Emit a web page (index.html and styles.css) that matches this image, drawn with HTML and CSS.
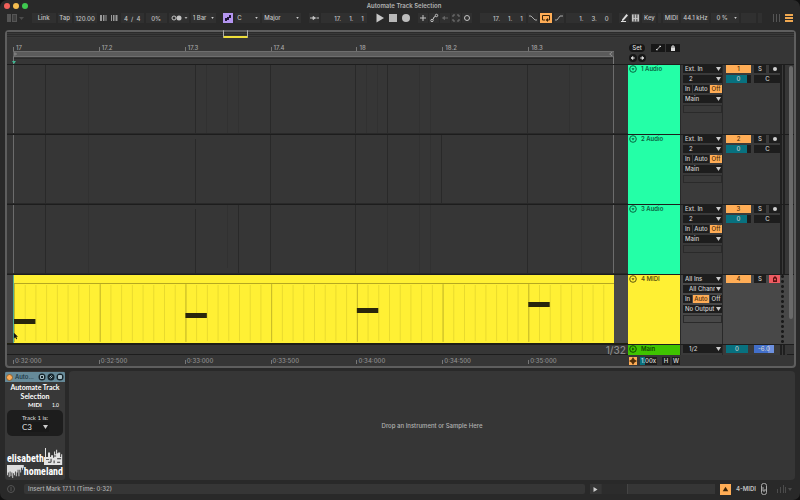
FILE: index.html
```html
<!DOCTYPE html>
<html lang="en">
<head>
<meta charset="utf-8">
<title>Automate Track Selection</title>
<link rel="stylesheet" href="styles.css">
</head>
<body>
<div class="window">
  <header class="titlebar">
    <div class="lights"><i class="light red"></i><i class="light amber"></i><i class="light green"></i></div>
    <h1>Automate Track Selection</h1>
    <div class="lights"></div>
  </header>

  <nav class="toolbar" aria-label="Control bar">
    <div class="group view-group">
      <svg class="ic" viewBox="0 0 10 10"><path fill="#555" d="M0 1h4v8H0zM5 1h5v8H5z"/><path fill="#404040" d="M6 2h3v6H6z"/></svg>
      <svg class="tiny" viewBox="0 0 5 5"><path fill="#4c4c4c" d="M0 1h5L2.500 4z"/></svg>
    </div>
    <div class="group">
      <button class="w24">Link</button><button class="w14">Tap</button>
      <input class="w23" aria-label="Tempo" value="120.00">
      <span class="nudge">
        <svg class="ic" viewBox="0 0 10 10"><path fill="#999" d="M1 2h2v6H1zM4 2h1.500v6H4zM6.500 2h1v6h-1z"/></svg>
        <svg class="ic" viewBox="0 0 10 10"><path fill="#999" d="M2 2h1v6H2zM4 2h1.500v6H4zM6.500 2h2v6h-2z"/></svg>
      </span>
      <input class="w23 spaced" aria-label="Time signature" value="4  /  4">
      <input class="w21" aria-label="Groove amount" value="0%">
      <button class="w20" aria-label="Metronome"><svg viewBox="0 0 20 10"><circle cx="5" cy="5" r="2" fill="none" stroke="#c4c4c4"/><circle cx="10" cy="5" r="2.500" fill="#c4c4c4"/><path fill="#aaa" d="M15.500 4h3L17 6z"/></svg></button>
      <select class="w25" aria-label="Quantization"><option>1 Bar</option></select>
    </div>
    <div class="group">
      <button class="w10 violet" aria-label="Scale mode"><svg viewBox="0 0 10 10"><path fill="#201638" d="M2 5h2v3H2zM4 4h2v3H4zM6 2h2v3H6z"/></svg></button>
      <select class="w25" aria-label="Root note"><option>C</option></select>
      <select class="w39" aria-label="Scale name"><option>Major</option></select>
    </div>
    <div class="group">
      <button class="w10" aria-label="Follow"><svg viewBox="0 0 10 10"><path stroke="#c4c4c4" fill="#c4c4c4" d="M1 5h3M7.500 5H10M4 3.500v3L6.500 5z"/></svg></button>
      <input class="w46 num" aria-label="Position" value="17.     1.     1">
    </div>
    <div class="group transport">
      <button class="w10" aria-label="Play"><svg viewBox="0 0 10 10"><path fill="#c8c8c8" d="M1.500.5 9 5 1.500 9.500z"/></svg></button>
      <button class="w10" aria-label="Stop"><svg viewBox="0 0 10 10"><path fill="#b8b8b8" d="M1 1h8v8H1z"/></svg></button>
      <button class="w10" aria-label="Record"><svg viewBox="0 0 10 10"><circle cx="5" cy="5" r="4" fill="#bdbdbd"/></svg></button>
    </div>
    <div class="group tight">
      <button class="w10" aria-label="Overdub"><svg viewBox="0 0 10 10"><path stroke="#c4c4c4" d="M5 2v6M2 5h6"/></svg></button>
      <button class="w10" aria-label="Automation arm"><svg viewBox="0 0 10 10"><g fill="none" stroke="#c4c4c4"><circle cx="3" cy="7.500" r="1.200"/><circle cx="7.500" cy="2.500" r="1.200"/><path d="M4 6.500 5 4l1.500-.5"/></g></svg></button>
      <button class="w10" aria-label="Re-enable automation"><svg viewBox="0 0 10 10"><path stroke="#666" fill="#666" d="M4 5h4M2.500 5l2-1.500v3z"/></svg></button>
      <button class="w10" aria-label="Capture"><svg viewBox="0 0 10 10"><path fill="none" stroke="#777" d="M2 4V2h2M6 2h2v2M8 6v2H6M4 8H2V6"/></svg></button>
      <button class="w10" aria-label="Session record"><svg viewBox="0 0 10 10"><circle cx="5" cy="5" r="2.500" fill="none" stroke="#c4c4c4"/></svg></button>
    </div>
    <div class="group">
      <input class="w46 num" aria-label="Loop start" value="17.     1.     1">
      <button class="w10" aria-label="Punch in"><svg viewBox="0 0 10 10"><path fill="none" stroke="#aaa" d="M1 3h2l4 4h2"/></svg></button>
      <button class="w12 orange" aria-label="Loop"><svg viewBox="0 0 12 10"><path fill="none" stroke="#3a2408" d="M5 7H2.500V2.500h7V7H8"/><path fill="#3a2408" d="M8 5v4L5.500 7z"/></svg></button>
      <button class="w10" aria-label="Punch out"><svg viewBox="0 0 10 10"><path fill="none" stroke="#aaa" d="M1 7h2l3-4h3"/></svg></button>
      <input class="w46 num" aria-label="Loop length" value="1.     3.     0">
    </div>
    <div class="group">
      <button class="w10" aria-label="Draw mode"><svg viewBox="0 0 10 10"><path fill="#ddd" d="M3 6.500 7.500 1 9 2.500 4.500 7.500 3 8z"/><path stroke="#ddd" d="M2 8.500h5"/></svg></button>
      <button class="w9" aria-label="Computer keyboard"><svg viewBox="0 0 10 10"><path fill="#c4c4c4" d="M1 1h8v8H1z"/><path stroke="#333" d="M3.500 1v4M6.500 1v4M3.500 6v3M6.500 6v3"/></svg></button>
      <button class="w14">Key</button><i class="led w3"></i><button class="w16">MIDI</button>
      <button class="w28">44.1 kHz</button>
      <select class="w28 cpu" aria-label="CPU load"><option>0 %</option></select>
      <i class="led w15"></i><i class="led w4"></i>
    </div>
    <div class="group browser">
      <svg class="ic" viewBox="0 0 10 10"><path stroke="#555" d="M1.500 1v8M4.500 1v8M7.500 1v8"/></svg>
      <svg class="ic" viewBox="0 0 10 10"><path stroke="#f0a850" stroke-width="2" d="M1 2h8M1 5h8M1 8h8"/></svg>
    </div>
  </nav>

  <main class="arrangement">
    <div class="overview"><i class="viewport"></i></div>
    <div class="board">
      <div class="row head-row">
        <div class="ruler">
          <ol class="beats"><li>17</li><li>17.2</li><li>17.3</li><li>17.4</li><li>18</li><li>18.2</li><li>18.3</li></ol>
          <div class="loopbar">
            <svg viewBox="0 0 6 6"><path fill="none" stroke="#999" d="M1 1l3 2-3 2z"/></svg>
            <svg viewBox="0 0 6 6"><path fill="none" stroke="#aaa" d="M5 0 1 3l4 3"/></svg>
          </div>
          <div class="scrub"><svg class="marker" viewBox="0 0 4 3"><path fill="#3fb591" d="M0 0h4L2 3z"/></svg></div>
        </div>
        <div class="locators">
          <div class="line"><button class="pill">Set</button>
            <button class="sq" aria-label="Optimize"><svg viewBox="0 0 14 8"><path stroke="#ddd" fill="#ddd" stroke-width=".8" d="M6 5.500 9 2.500M5.500 5v1h1zM8.500 2H9.500V3z"/></svg></button>
            <button class="sq" aria-label="Lock envelopes"><svg viewBox="0 0 14 8"><path fill="#ddd" d="M5 3.500h4V7H5z"/><path fill="none" stroke="#ddd" d="M6 4V2h2v2"/></svg></button></div>
          <div class="line arrows">
            <button class="round" aria-label="Previous locator"><svg viewBox="0 0 8 8"><path stroke="#ddd" fill="#ddd" stroke-width=".8" d="M3 4h3M2 4l2-1.500v3z"/></svg></button>
            <button class="round" aria-label="Next locator"><svg viewBox="0 0 8 8"><path stroke="#ddd" fill="#ddd" stroke-width=".8" d="M2 4h3M6 4 4 2.500v3z"/></svg></button></div>
        </div>
      </div>

      <section class="row track">
        <div class="lane"><svg class="grid" viewBox="0 0 601 69" preserveAspectRatio="none"><path class="strong" d="M32 0v69M182 0v69M257 0v69M343 0v69M375 0v69M515 0v69"/><path class="faint" d="M75 0v69M193 0v69M214 0v69M225 0v69M354 0v69M365 0v69M407 0v69M418 0v69M557 0v69M569 0v69"/></svg></div>
        <div class="name mint"><svg class="fold" viewBox="0 0 8 8"><circle cx="4" cy="4" r="3.300"/><path d="M2.500 3.200h3L4 5.500z"/></svg><h2>1 Audio</h2></div>
        <div class="io"><select aria-label="Input 1"><option>Ext. In</option></select><select class="in" aria-label="Channel 1"><option>2</option></select>
          <div class="monitor"><button>In</button><button>Auto</button><button class="on">Off</button></div><select aria-label="Output 1"><option>Main</option></select><i class="blank"></i></div>
        <div class="mixer"><button class="act">1</button><button>S</button><button aria-label="Arm 1"><i class="dot"></i></button><input class="vol" aria-label="Volume 1" value="0"><input class="pan" aria-label="Pan 1" value="C"></div>
        <div class="meter"></div>
      </section>

      <section class="row track">
        <div class="lane"><svg class="grid" viewBox="0 0 601 69" preserveAspectRatio="none"><path class="strong" d="M32 0v69M182 4v65M257 0v69M343 0v69M375 0v69M429 0v69M515 0v69"/><path class="faint" d="M75 0v69M407 0v69M418 0v69M569 0v69"/></svg></div>
        <div class="name mint"><svg class="fold" viewBox="0 0 8 8"><circle cx="4" cy="4" r="3.300"/><path d="M2.500 3.200h3L4 5.500z"/></svg><h2>2 Audio</h2></div>
        <div class="io"><select aria-label="Input 2"><option>Ext. In</option></select><select class="in" aria-label="Channel 2"><option>2</option></select>
          <div class="monitor"><button>In</button><button>Auto</button><button class="on">Off</button></div><select aria-label="Output 2"><option>Main</option></select><i class="blank"></i></div>
        <div class="mixer"><button class="act">2</button><button>S</button><button aria-label="Arm 2"><i class="dot"></i></button><input class="vol" aria-label="Volume 2" value="0"><input class="pan" aria-label="Pan 2" value="C"></div>
        <div class="meter"></div>
      </section>

      <section class="row track">
        <div class="lane"><svg class="grid" viewBox="0 0 601 69" preserveAspectRatio="none"><path class="strong" d="M32 0v69M182 4v65M225 0v69M257 0v69M343 0v69M515 0v69"/><path class="faint" d="M75 0v69M214 0v64M375 0v69M407 0v69M418 0v69M569 0v69"/></svg></div>
        <div class="name mint"><svg class="fold" viewBox="0 0 8 8"><circle cx="4" cy="4" r="3.300"/><path d="M2.500 3.200h3L4 5.500z"/></svg><h2>3 Audio</h2></div>
        <div class="io"><select aria-label="Input 3"><option>Ext. In</option></select><select class="in" aria-label="Channel 3"><option>2</option></select>
          <div class="monitor"><button>In</button><button>Auto</button><button class="on">Off</button></div><select aria-label="Output 3"><option>Main</option></select><i class="blank"></i></div>
        <div class="mixer"><button class="act">3</button><button>S</button><button aria-label="Arm 3"><i class="dot"></i></button><input class="vol" aria-label="Volume 3" value="0"><input class="pan" aria-label="Pan 3" value="C"></div>
        <div class="meter"></div>
      </section>

      <section class="row track selected">
        <div class="lane"><svg class="clip" viewBox="0 0 56 68" preserveAspectRatio="none">
          <defs>
            <pattern id="fine" width="1" height="68" patternUnits="userSpaceOnUse"><rect width=".09" height="68" fill="#e8da2d"/></pattern>
            <pattern id="beat" width="8" height="68" patternUnits="userSpaceOnUse"><rect width=".09" height="68" fill="#c6b926"/></pattern>
          </defs>
          <rect width="56" height="68" fill="#fff034"/>
          <rect y="10" width="56" height="56" fill="url(#fine)"/><rect y="9" width="56" height="58" fill="url(#beat)"/>
          <rect y="8" width="56" height="1" fill="#b5a820"/>
          <path fill="#29260c" d="M0 44h2v5H0zM16 38h2v5h-2zM32 33h2v5h-2zM48 27h2v5h-2z"/></svg>
          <svg class="cursor" viewBox="0 0 6 8"><path fill="#111" d="M1 0v7l1.500-1.500L4 8l1-.5L4 5h2z"/></svg></div>
        <div class="name yellow"><svg class="fold" viewBox="0 0 8 8"><circle cx="4" cy="4" r="3.300"/><path d="M2.500 3.200h3L4 5.500z"/></svg><h2>4 MIDI</h2></div>
        <div class="io"><select aria-label="Input 4"><option>All Ins</option></select><select class="in" aria-label="Channel 4"><option>All Channels</option></select>
          <div class="monitor"><button>In</button><button class="on">Auto</button><button>Off</button></div><select aria-label="Output 4"><option>No Output</option></select><i class="blank"></i></div>
        <div class="mixer"><button class="act">4</button><button>S</button><button class="armed" aria-label="Arm 4"><svg viewBox="0 0 10 8"><path fill="#5a1010" d="M3 3l2-2 2 2v4H3z"/><circle cx="5" cy="4.500" r="1" fill="#ef5b62"/></svg></button></div>
        <div class="meter dots"></div>
      </section>

      <section class="row main-row">
        <div class="lane"><span class="gridsize">1/32</span></div>
        <div class="name green"><svg class="fold" viewBox="0 0 8 8"><circle cx="4" cy="4" r="3.300"/><path d="M3.200 2.500v3L5.500 4z"/></svg><h2>Main</h2></div>
        <div class="io"><select class="in" aria-label="Main output"><option>1/2</option></select></div>
        <div class="mixer"><input class="cue" aria-label="Main pan" value="0"><input class="gain" aria-label="Main volume" value="-6.0"></div>
        <div class="meter"></div>
      </section>

      <div class="row foot-row">
        <div class="ruler"><ol class="beats times"><li>0:32:000</li><li>0:32:500</li><li>0:33:000</li><li>0:33:500</li><li>0:34:000</li><li>0:34:500</li><li>0:35:000</li></ol></div>
        <div class="zoombar">
          <button class="orange" aria-label="Automation mode"><svg viewBox="0 0 8 8"><path fill="#54300a" d="M4 0l1.500 2.500L8 4 5.500 5.500 4 8 2.500 5.500 0 4l2.500-1.500z"/></svg></button>
          <input class="speed" aria-label="Playback speed" value="1.00x"><button>H</button><button>W</button>
        </div>
      </div>
      <i class="scrollbar"></i>
    </div>
  </main>

  <section class="devices">
    <article class="device">
      <header><i class="power"></i><h3>Auto...</h3>
        <svg viewBox="0 0 8 8"><circle cx="4" cy="4" r="3.500"/><path d="M2.500 2.500h3v3h-3z"/></svg>
        <svg viewBox="0 0 8 8"><circle cx="4" cy="4" r="3.500"/><path d="M2.500 4.500 4.500 2.500M3.500 5.500l2-2"/></svg>
        <svg viewBox="0 0 8 8"><circle cx="4" cy="4" r="3.500"/><path class="solid" d="M2.500 2.500h3v3h-3z"/></svg>
      </header>
      <div class="device-body">
        <p class="device-title">Automate Track Selection</p>
        <p class="version"><span></span><b>MIDI</b><small>1.0</small></p>
        <div class="card"><label for="note">Track 1 is:</label><select id="note"><option>C3</option></select></div>
        <div class="brand">
          <div class="brand-line"><span>elisabeth</span><svg class="skyline" viewBox="0 0 19 19" preserveAspectRatio="none"><path fill="#e4e4e4" d="M0 19V10h1V0h1v10h2V5h2v5h1V8h2v3h1V4h1v3h1V2h1v4h1V5h2v5h1V7h1v12z"/><path stroke="#333" d="M2 13h3M7 12v4M10 9h2M13 12h4M4 16h3M10 14v3M13 16h3"/></svg></div>
          <div class="brand-line"><svg class="wave" viewBox="0 0 19 14" preserveAspectRatio="none"><path fill="#ddd" d="M0 0h19v3h-1v2h-1V3h-1v5h-1V5h-1v7h-1V5h-1v3h-1v4h-1V7H9v4H8V9H7v5H6V8H5v4H4V7H3v6H2V8H1v3H0z"/></svg><span>homeland</span></div>
        </div>
      </div>
    </article>
    <div class="dropzone"><p>Drop an Instrument or Sample Here</p></div>
  </section>

  <footer class="status">
    <svg class="info" viewBox="0 0 8 8"><circle cx="4" cy="4" r="3.500" fill="none" stroke="#555"/><path stroke="#555" d="M4 2v4"/></svg>
    <p class="message">Insert Mark 17.1.1 (Time: 0:32)</p>
    <div class="preview"><button aria-label="Preview"><svg viewBox="0 0 10 10"><path fill="#ccc" d="M3 3l4 2.500L3 8z"/></svg></button><i></i></div>
    <button class="warn" aria-label="Show device view"><svg viewBox="0 0 12 12"><path fill="#3a2408" d="M6 3l3 5H3z"/></svg></button>
    <b class="current">4-MIDI</b>
    <svg class="plug" viewBox="0 0 6 12"><rect x=".5" y=".5" width="5" height="11" rx="2" fill="none" stroke="#aaa"/><path stroke="#aaa" fill="none" d="M2 4v4h2V6"/></svg>
    <svg class="bars" viewBox="0 0 16 8"><path stroke="#4c4c4c" d="M1.500 4v4M4.500 2v6M7.500 0v8M9.500 2v6"/><path fill="#4c4c4c" d="M12 3h4l-2 3z"/></svg>
  </footer>
</div>
</body>
</html>
```
FILE: styles.css
```css
* { box-sizing: border-box; margin: 0; padding: 0; }
html { background: #101010; }
body { font: 500 6px/8px Inter, "Liberation Sans", sans-serif; color: #c4c4c4; }
svg { display: block; }
ol { list-style: none; }
i { font-style: normal; display: block; }
h1, h2, h3, p { font-size: inherit; font-weight: inherit; white-space: nowrap; }

button, input, select {
  font: inherit; color: inherit; border: 0; border-radius: 0;
  background-color: #232323; text-align: center; white-space: nowrap;
  min-width: 0; width: 100%; height: 8px; appearance: none; overflow: hidden;
}
button svg { width: 100%; height: 100%; }
select {
  text-align: left; padding: 0 7px 0 2px;
  background-image: url("data:image/svg+xml,%3Csvg xmlns='http://www.w3.org/2000/svg' viewBox='0 0 5 4'%3E%3Cpath fill='%23ccc' d='M0 0h5L2.500 4z'/%3E%3C/svg%3E");
  background-repeat: no-repeat; background-position: right 1px center; background-size: 5px 4px;
}

.window { min-height: 100vh; display: flex; flex-direction: column; background: #292929; border-radius: 7px; overflow: hidden; padding-bottom: 5px; }

.titlebar { display: flex; align-items: center; height: 12px; padding: 0 0 0 4px; }
.titlebar h1 { font-size: 6px; font-weight: 600; color: #b4b4b4; padding-left: 4px; }
.lights { flex: 1; display: flex; gap: 3px; }
.light { width: 6px; height: 6px; border-radius: 50%; }
.red { background: #f0605a; }
.amber { background: #f4bd4f; }
.green { background: #3fc950; }

.toolbar { display: flex; justify-content: space-between; height: 12px; align-items: center; padding: 0 6px 0 7px; }
.toolbar .group { display: flex; gap: 2px; align-items: center; }
.toolbar .tight { gap: 1px; }
.toolbar .transport { gap: 3px; }
.toolbar button, .toolbar input, .toolbar select { height: 10px; background-color: #303030; }
.toolbar select { background-size: 3px 2px; background-position: right 2px center; padding-right: 5px; }
.toolbar .transport button { background: none; }
.toolbar .num { text-align: right; padding-right: 3px; white-space: pre; }
.toolbar .spaced { white-space: pre; }
.toolbar .violet { background: #b495f0; }
.orange, .toolbar .orange { background: #ffad56; }
.toolbar .cpu { padding-left: 5px; }
.browser { padding-left: 2px; }
.ic { width: 10px; height: 10px; }
.tiny { width: 5px; height: 5px; }
.nudge { display: flex; }
.led { height: 10px; background: #303030; }
.w3 { width: 3px; } .w4 { width: 4px; }
.toolbar .w9 { width: 9px; } .toolbar .w10 { width: 10px; } .toolbar .w12 { width: 12px; }
.toolbar .w14 { width: 14px; } .w15 { width: 15px; } .toolbar .w16 { width: 16px; }
.toolbar .w20 { width: 20px; } .toolbar .w21 { width: 21px; } .toolbar .w23 { width: 23px; }
.toolbar .w24 { width: 24px; } .toolbar .w25 { width: 25px; } .toolbar .w28 { width: 28px; }
.toolbar .w39 { width: 39px; } .toolbar .w46 { width: 46px; }

.arrangement { flex: 1; display: flex; flex-direction: column; margin: 6px 4px 3px 5px; border: 2px solid #5e5e5e; border-radius: 4px; background: #363636; }
.overview { position: relative; height: 6px; background: repeating-linear-gradient(#2b2b2b 0 1px, #393939 1px 2px); }
.viewport { position: absolute; left: 27.5%; width: 25px; top: -2px; height: 8px; border: 1px solid #aaa; border-top: 0; border-bottom: 2px solid #efdf3a; border-radius: 1px; }
.board { position: relative; flex: 1; display: flex; flex-direction: column; }
.row { display: grid; grid-template-columns: minmax(0, 1fr) 52px 43px 57px 7px 7px; }
.head-row { height: 27px; }
.ruler { padding: 0 14px 0 6px; }
.head-row .ruler { padding-top: 6px; }
.locators, .zoombar { grid-column: 2 / -1; }
.beats { display: grid; grid-template-columns: repeat(7, minmax(0, 1fr)); height: 7px; line-height: 7px; color: #a6a6a6; }
.beats li { padding-left: 3px; background: linear-gradient(#777, #777) left bottom / 1px 4px no-repeat; }
.loopbar { display: flex; justify-content: space-between; height: 6px; background: #5b5b5b; border: 1px solid #6e6e6e; border-width: 1px 0; }
.loopbar svg { width: 6px; height: 4px; }
.scrub { height: 8px; border: 1px solid #777; border-width: 0 1px; background: linear-gradient(#292929, #292929) left 1px / 100% 1px no-repeat; padding-top: 4px; }
.marker { width: 4px; height: 3px; margin-left: -2px; }
.locators { padding: 6px 0 0 1px; }
.line { display: flex; gap: 6px; }
.arrows { gap: 1px; padding-top: 2px; }
.locators button { background: #171717; color: #ddd; }
.locators .pill { width: 16px; border-radius: 4px; }
.locators .sq { width: 14px; }
.locators .sq + .sq { margin-left: -5px; }
.locators .round { width: 8px; border-radius: 50%; }

.track { flex: 1 1 0; border-top: 1px solid #1d1d1d; min-height: 60px; grid-template-rows: minmax(0, 1fr); }
.head-row { margin-bottom: -1px; }
.track .lane { padding: 0 14px 0 6px; position: relative; display: grid; grid-template-rows: minmax(0, 1fr); border-bottom: 1px solid #292929; }
.grid, .clip { width: 100%; height: 100%; contain: size; }
.grid { border: 1px solid #6c6c6c; border-width: 0 1px; }
.grid path { fill: none; shape-rendering: crispEdges; }
.strong { stroke: #292929; }
.faint { stroke: #313131; }
.selected { background: #484848; }
.selected .lane { border-bottom-color: #202010; }
.clip { border-left: 1px solid #4fae96; }
.cursor { position: absolute; left: 6px; bottom: 3px; width: 5px; height: 8px; }
.name { display: flex; gap: 4px; padding: 0 0 0 1px; font-weight: 600; }
.name h2 { line-height: 8px; }
.mint { background: #24ffa7; color: #0a6542; }
.yellow { background: #fff034; color: #5c5510; }
.green.name { background: #3fc300; color: #134700; }
.fold { width: 8px; height: 8px; flex: none; }
.fold circle { fill: none; stroke: currentColor; stroke-width: 1; }
.fold path { fill: currentColor; }
.io { display: flex; flex-direction: column; gap: 2px; padding: 0 0 0 2px; border: 1px solid #292929; border-width: 0 1px; background: #3a3a3a; }
.selected .io, .selected .mixer { background: #484848; }
.io select, .io button, .mixer button, .mixer input { background-color: #1d1d1d; color: #d0d0d0; flex: none; }
.io .in { padding-left: 6px; }
.monitor { display: grid; grid-template-columns: 9px 1fr 12px; gap: 1px; }
.io .on { background: #ffad56; color: #4b2b08; }
.mixer .act { background: #ffad56; color: #4b2b08; }
.blank { height: 8px; border: 1px solid #2a2a2a; }
.mixer { display: grid; grid-template-columns: 25px 12px 12px; grid-auto-rows: 8px; gap: 2px 3px; padding: 0 0 0 3px; background: #3a3a3a; }
.mixer .vol { background: linear-gradient(90deg, #08717f 84%, #1d1d1d 84%); }
.mixer .cue { background: #08717f; width: 22px; }
.mixer .pan, .mixer .gain { grid-column: 2 / 4; }
.mixer .gain { background: linear-gradient(90deg, #426fca 70%, #6c90df 70%); width: 20px; }
.mixer .armed { background: #ef5b62; }
.dot { width: 4px; height: 4px; margin: 0 auto; border-radius: 50%; background: #d0d0d0; }
.meter { background: linear-gradient(90deg, #1f1f1f 2px, #3a3a3a 2px 3px, #1f1f1f 3px 5px, #363636 5px); }
.dots { background: radial-gradient(circle, #1a1a1a 1px, #484848 2px) 0 4px / 5px 5px repeat-y; }
.main-row { height: 11px; border: 1px solid #1d1d1d; border-width: 1px 0; }
.main-row .lane { display: flex; justify-content: flex-end; padding-right: 2px; }
.gridsize { font-size: 10px; line-height: 10px; color: #8a8a8a; }
.foot-row { height: 11px; }
.foot-row .ruler { padding-top: 2px; }
.times { color: #8f8f8f; }
.times li { padding-left: 2px; }
.zoombar { display: flex; gap: 2px; padding: 2px 0 0 1px; }
.zoombar button { width: 8px; background-color: #1d1d1d; color: #ddd; }
.zoombar .orange { background: #ffad56; }
.zoombar .speed { width: 17px; margin: 0 3px 0 1px; background: linear-gradient(90deg, #08717f 5px, #1d1d1d 5px); color: #ddd; }
.scrollbar { position: absolute; right: 1px; top: 28px; bottom: 47px; width: 4px; border-radius: 2px; background: #6a6a6a; }

.devices { display: flex; gap: 4px; height: 109px; margin: 0 5px; }
.device { width: 60px; display: flex; flex-direction: column; border-radius: 3px; overflow: hidden; background: #383838; color: #fff; }
.device header { display: flex; align-items: center; gap: 1px; height: 10px; padding: 0 1px; background: #668a99; color: #16303a; margin-top: 1px; }
.device h3 { flex: 1; padding-left: 1px; }
.power { width: 7px; height: 7px; border-radius: 50%; background: #ffad56; border: 1px solid #866037; }
.device header svg { width: 8px; height: 8px; }
.device header circle { fill: #17252b; }
.device header path { fill: none; stroke: #a9c0c8; stroke-width: 1; }
.device header .solid { fill: #a9c0c8; }
.device-body { flex: 1; display: flex; flex-direction: column; padding: 0 2px; }
.device-title { font-family: Lato, sans-serif; font-weight: 700; font-size: 7px; line-height: 9px; text-align: center; white-space: normal; padding-top: 1px; }
.version { display: grid; grid-template-columns: 1fr auto 1fr; font-family: Lato, sans-serif; font-size: 6px; line-height: 7px; }
.version small { text-align: right; padding-right: 4px; font-size: 5px; line-height: 9px; }
.card { display: flex; flex-direction: column; align-items: center; padding: 4px 0; background: #1d1d1d; border-radius: 5px; font-family: Lato, sans-serif; color: #d8d8d8; }
.card select { width: 28px; height: 10px; font-size: 8px; line-height: 10px; background-color: #191919; padding-left: 1px; }
.brand { margin-top: auto; padding-bottom: 2px; font: 700 10px/13px "Roboto Condensed", "Open Sans Condensed", "Liberation Sans Narrow", "Liberation Sans", sans-serif; }
.brand-line { display: flex; align-items: flex-end; justify-content: space-between; height: 13px; }
.skyline { flex: 1; height: 17px; min-width: 0; }
.wave { flex: 1; height: 13px; min-width: 0; }
.dropzone { flex: 1; display: grid; place-items: center; background: #363636; border-radius: 4px; color: #b2b2b2; }

.status { display: flex; align-items: center; height: 12px; margin-top: 3px; padding: 0 8px 0 7px; gap: 5px; }
.info { width: 8px; height: 8px; }
.message { flex: 1; margin-left: 4px; padding-left: 4px; line-height: 10px; background: #363636; border-radius: 2px; color: #b2b2b2; }
.preview { display: flex; width: 125px; gap: 1px; background: #323232; border-radius: 2px; }
.preview button { width: 11px; height: 10px; background: #363636; }
.preview i { flex: 1; background: linear-gradient(90deg, #2c2c2c 25px, #444 25px 26px, #363636 26px); }
.status .warn { width: 11px; height: 11px; background: #ffad56; }
.current { font-weight: 600; }
.plug { width: 6px; height: 12px; }
.bars { width: 16px; height: 8px; margin-left: 4px; }
```
